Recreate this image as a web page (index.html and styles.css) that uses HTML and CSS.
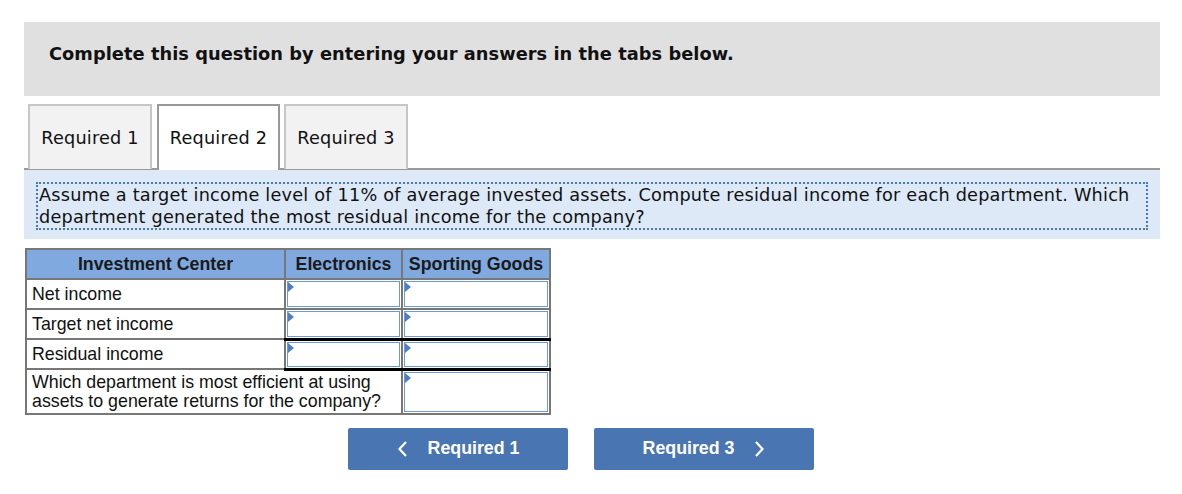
FILE: index.html
```html
<!DOCTYPE html>
<html>
<head>
<meta charset="utf-8">
<link rel="stylesheet" href="styles.css">
</head>
<body>
<div class="wrap">
  <div class="banner">Complete this question by entering your answers in the tabs below.</div>
  <div class="tabs">
    <div class="tab">Required 1</div>
    <div class="tab active">Required 2</div>
    <div class="tab">Required 3</div>
  </div>
  <div class="prompt">
    <div class="prompt-box">Assume a target income level of 11% of average invested assets. Compute residual income for each department. Which department generated the most residual income for the company?</div>
  </div>
  <table class="grid">
    <thead>
      <tr><th class="c1">Investment Center</th><th class="c2">Electronics</th><th class="c3">Sporting Goods</th></tr>
    </thead>
    <tbody>
      <tr><td class="label">Net income</td><td class="in"><div class="box"></div></td><td class="in"><div class="box"></div></td></tr>
      <tr><td class="label">Target net income</td><td class="in"><div class="box"></div></td><td class="in"><div class="box"></div></td></tr>
      <tr class="total"><td class="label">Residual income</td><td class="in"><div class="box"></div></td><td class="in"><div class="box"></div></td></tr>
      <tr class="last"><td class="label" colspan="2">Which department is most efficient at using<br>assets to generate returns for the company?</td><td class="in"><div class="box tall"></div></td></tr>
    </tbody>
  </table>
  <div class="nav">
    <div class="btn"><svg class="chev" width="11" height="16" viewBox="0 0 11 16"><polyline points="9,1 2.5,8 9,15" fill="none" stroke="#fff" stroke-width="2.2"/></svg><span>Required 1</span></div>
    <div class="btn"><span>Required 3</span><svg class="chev" width="11" height="16" viewBox="0 0 11 16"><polyline points="2,1 8.5,8 2,15" fill="none" stroke="#fff" stroke-width="2.2"/></svg></div>
  </div>
</div>
</body>
</html>
```
FILE: styles.css
```css
body {
  margin: 0;
  background: #fff;
  font-family: "DejaVu Sans", Verdana, sans-serif;
  color: #111;
}
.wrap {
  margin: 22px 0 0 24px;
  width: 1136px;
}
.banner {
  background: #e0e0e0;
  height: 74px;
  box-sizing: border-box;
  padding: 22px 0 0 25px;
  font-weight: bold;
  font-size: 17.8px;
  letter-spacing: 0.05px;
  line-height: 20px;
}
.tabs {
  display: flex;
  gap: 5px;
  padding: 8px 0 0 4px;
  border-bottom: 2px solid #999;
  height: 74px;
  box-sizing: border-box;
  align-items: flex-end;
}
.tab {
  width: 124px;
  height: 65px;
  box-sizing: border-box;
  border: 2px solid #c6c6c6;
  border-bottom: none;
  background: #f2f2f2;
  display: flex;
  align-items: center;
  justify-content: center;
  font-size: 17.7px;
  letter-spacing: 0.2px;
  margin-bottom: -1px;
}
.tab.active {
  background: #fff;
  border-color: #999;
  height: 66px;
  margin-bottom: -2px;
  margin-right: -1px;
  width: 123px;
}
.prompt {
  background: #dde9f7;
  padding: 12px 12px 9px 12px;
}
.prompt-box {
  border: 2px dotted #4a78b8;
  padding: 0 1px;
  font-size: 17.7px;
  line-height: 22px;
  letter-spacing: 0.2px;
}
.grid {
  border-collapse: collapse;
  margin: 9px 0 0 1px;
  font-family: "Liberation Sans", Arial, sans-serif;
  font-size: 17.8px;
}
.grid th, .grid td {
  border: 2px solid #777;
  padding: 0;
}
.grid th {
  background: #80a9df;
  height: 28px;
  font-weight: bold;
  color: #1a1a1a;
}
.c1 { width: 257px; }
.c2 { width: 115px; }
.c3 { width: 146px; }
.grid td.label {
  height: 28px;
  padding: 0 5px;
  text-align: left;
}
.grid tr.last td.label {
  height: 42px;
  line-height: 19px;
}
.grid td.in {
  padding: 0 1px;
  vertical-align: middle;
}
.box {
  position: relative;
  height: 26px;
  border: 1px solid #6d9ad6;
  background: #fff;
  box-sizing: border-box;
}
.box::before {
  content: "";
  position: absolute;
  left: 0;
  top: 0;
  border-left: 6px solid #4d7fc4;
  border-top: 5px solid transparent;
  border-bottom: 5px solid transparent;
}
.box.tall { height: 40px; }
.grid tr.total td.in {
  border-top: 3px solid #000;
  border-bottom: 3px solid #000;
}
.grid tr.total td.in .box { height: 25px; }
.nav {
  display: flex;
  gap: 26px;
  margin: 13px 0 0 324px;
}
.btn {
  width: 220px;
  height: 42px;
  background: #4a75b3;
  border-radius: 2px;
  color: #fff;
  font-family: "Liberation Sans", Arial, sans-serif;
  font-weight: bold;
  font-size: 17.8px;
  display: flex;
  align-items: center;
  justify-content: center;
  gap: 20px;
}
.chev { display: block; }
```
